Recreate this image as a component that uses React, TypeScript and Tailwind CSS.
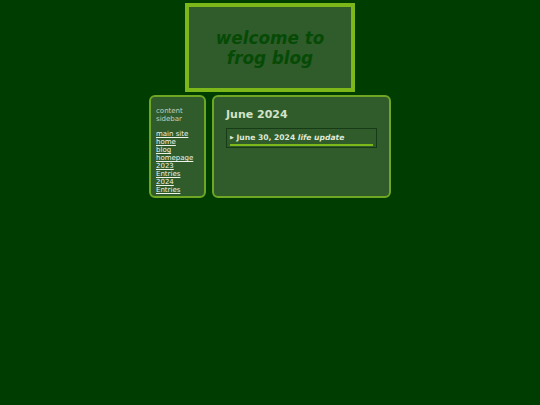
export default function App() {
  return (
    <div className="min-h-[405px] w-full bg-[#003d00] pt-[3px] font-['DejaVu_Sans',sans-serif]">
      <div className="mx-auto flex h-[89px] w-[170px] flex-col items-center justify-center border-[4px] border-[#7db81a] bg-[#2f5c2a]">
        <h1 className="text-center text-[16.8px] font-bold italic leading-[20px] text-[#064a06]">
          welcome to
          <br />
          frog blog
        </h1>
      </div>
      <div className="mt-[3px] flex justify-center gap-[6px]">
        <div className="h-[103px] w-[57px] rounded-[6px] border-2 border-[#6fa624] bg-[#2f5c2a] px-[5px] pt-[10px] text-[7px] leading-[8px]">
          <p className="text-[#c6cfbe]">
            content
            <br />
            sidebar
          </p>
          <div className="mt-[7px] flex flex-col text-[#eef2e8]">
            <a className="underline" href="#">main site</a>
            <a className="underline" href="#">home</a>
            <a className="underline" href="#">blog</a>
            <a className="underline" href="#">homepage</a>
            <a className="underline" href="#">2023</a>
            <a className="underline" href="#">Entries</a>
            <a className="underline" href="#">2024</a>
            <a className="underline" href="#">Entries</a>
          </div>
        </div>
        <div className="h-[103px] w-[179px] rounded-[6px] border-2 border-[#6fa624] bg-[#2f5c2a] px-[12px] pt-[11px]">
          <h2 className="text-[11px] font-bold leading-[14px] text-[#d3e3c8]">June 2024</h2>
          <div className="mt-[6px] border border-[#173a17] px-[3px] pt-[3px] pb-[1px]">
            <div className="border-b-2 border-[#7db81a] pb-[1px] text-[7.6px] font-bold leading-[10px] text-[#dfe8d6]">
              <span className="text-[5px] align-[1px]">▶</span> June 30, 2024 <i>life update</i>
            </div>
          </div>
        </div>
      </div>
    </div>
  );
}
